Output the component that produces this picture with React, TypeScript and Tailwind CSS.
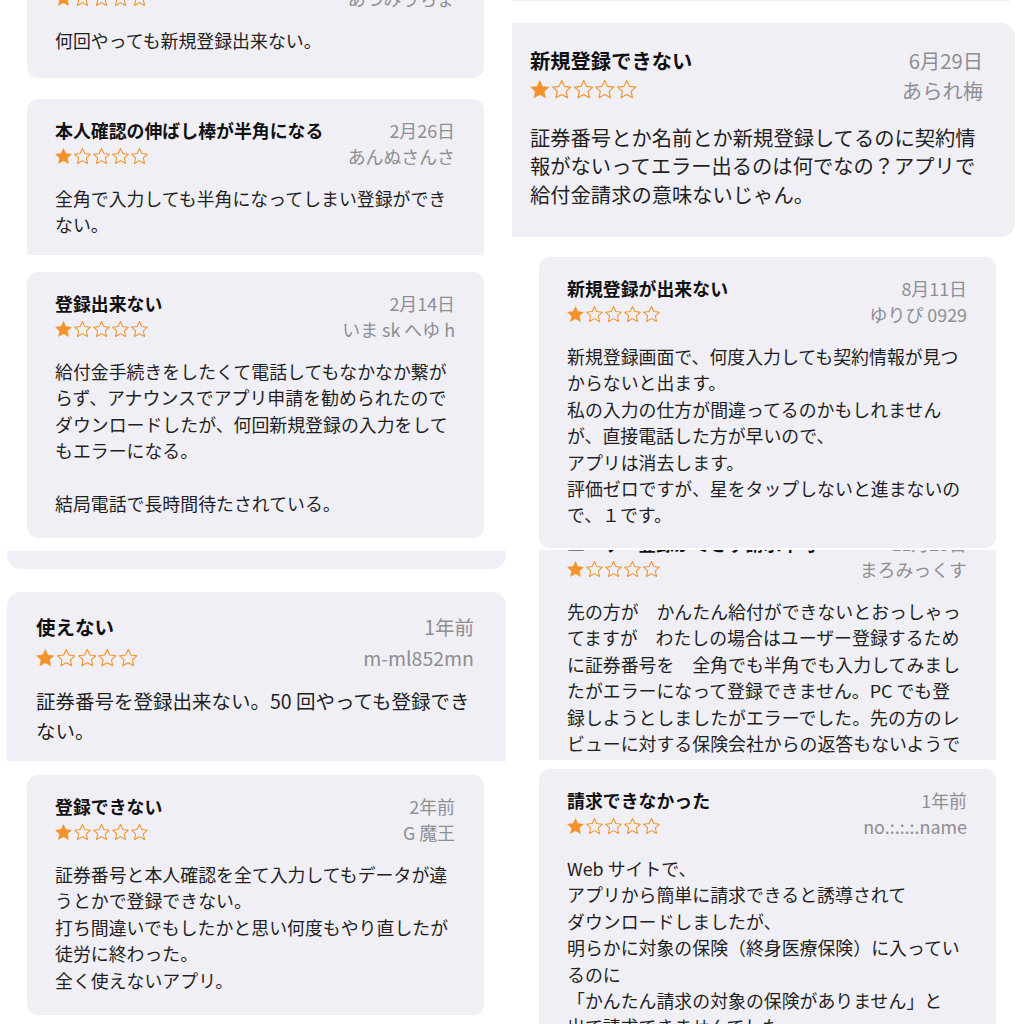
import React from "react";

type Variant = "sm" | "d" | "f";

const V: Record<Variant, { pad: string; titleRow: string; text: string; starRow: string; body: string; star: number; gap: string }> = {
  sm: {
    pad: "pl-[28px] pr-[29px] pt-[18px]",
    titleRow: "h-[26px]",
    text: "text-[17.9px]",
    starRow: "h-[27px]",
    body: "mt-[15px] leading-[26.4px]",
    star: 17,
    gap: "gap-[2px]",
  },
  d: {
    pad: "pl-[29px] pr-[32px] pt-[21px]",
    titleRow: "h-[28px]",
    text: "text-[19.5px]",
    starRow: "h-[34px]",
    body: "mt-[11px] leading-[30px]",
    star: 18.5,
    gap: "gap-[2.3px]",
  },
  f: {
    pad: "pl-[18px] pr-[32px] pt-[23px]",
    titleRow: "h-[28px]",
    text: "text-[20.3px]",
    starRow: "h-[32px]",
    body: "mt-[17px] leading-[28.3px]",
    star: 19.5,
    gap: "gap-[2.3px]",
  },
};

const STAR = "M12 2.2l2.9 6.2 6.8.8-5 4.6 1.4 6.7L12 17.1l-6.1 3.4 1.4-6.7-5-4.6 6.8-.8z";

function Star({ filled, size }: { filled: boolean; size: number }) {
  return (
    <svg width={size} height={size} viewBox="1.6 1.6 20.8 20.8">
      <path
        d={STAR}
        fill={filled ? "#f3922a" : "none"}
        stroke="#f3922a"
        strokeWidth={filled ? 0.6 : 1.25}
        strokeLinejoin="round"
      />
    </svg>
  );
}

function Stars({ v }: { v: Variant }) {
  return (
    <div className={`flex items-center ${V[v].gap}`}>
      {[0, 1, 2, 3, 4].map((i) => (
        <Star key={i} filled={i === 0} size={V[v].star} />
      ))}
    </div>
  );
}

function Review({
  v,
  title,
  date,
  author,
  lines,
  outer,
  inner = "",
}: {
  v: Variant;
  title: string;
  date: string;
  author: string;
  lines: string[];
  outer: string;
  inner?: string;
}) {
  const c = V[v];
  return (
    <div className={`bg-[#f0eff5] overflow-hidden shrink-0 ${outer}`}>
      <div className={`${c.pad} ${c.text} ${inner}`}>
        <div className={`flex items-center justify-between ${c.titleRow}`}>
          <span className="font-bold text-[#111111] whitespace-nowrap">{title}</span>
          <span className="text-[#8e8e93] whitespace-nowrap">{date}</span>
        </div>
        <div className={`flex items-center justify-between ${c.starRow}`}>
          <Stars v={v} />
          <span className="text-[#8e8e93] whitespace-nowrap">{author}</span>
        </div>
        <div className={`text-[#1f1f1f] ${c.body}`}>
          {lines.map((l, i) => (
            <div key={i} className="whitespace-pre">
              {l === "" ? "\u00a0" : l}
            </div>
          ))}
        </div>
      </div>
    </div>
  );
}

export default function App() {
  return (
    <div className="w-[1024px] h-[1024px] overflow-hidden bg-white flex font-['Noto_Sans_CJK_JP','Noto_Sans',sans-serif]">
      {/* Left column */}
      <div className="w-[512px] flex flex-col shrink-0">
        <Review
          v="sm"
          outer="ml-[27px] w-[457px] h-[78px] rounded-b-[11px]"
          inner="-mt-[59px]"
          title="新規登録ができない"
          date="3月2日"
          author="あつみうちょ"
          lines={["何回やっても新規登録出来ない。"]}
        />
        <Review
          v="sm"
          outer="mt-[21px] ml-[27px] w-[457px] h-[156px] rounded-t-[11px]"
          title="本人確認の伸ばし棒が半角になる"
          date="2月26日"
          author="あんぬさんさ"
          lines={["全角で入力しても半角になってしまい登録ができ", "ない。"]}
        />
        <Review
          v="sm"
          outer="mt-[17px] ml-[27px] w-[457px] h-[266px] rounded-[11px]"
          title="登録出来ない"
          date="2月14日"
          author="いま sk へゆ h"
          lines={[
            "給付金手続きをしたくて電話してもなかなか繋が",
            "らず、アナウンスでアプリ申請を勧められたので",
            "ダウンロードしたが、何回新規登録の入力をして",
            "もエラーになる。",
            "",
            "結局電話で長時間待たされている。",
          ]}
        />
        <div className="mt-[13px] ml-[7px] w-[499px] h-[18px] bg-[#f0eff5] rounded-b-[14px] shrink-0" />
        <Review
          v="d"
          outer="mt-[23px] ml-[7px] w-[499px] h-[169px] rounded-t-[14px]"
          title="使えない"
          date="1年前"
          author="m-ml852mn"
          lines={["証券番号を登録出来ない。50 回やっても登録でき", "ない。"]}
        />
        <Review
          v="sm"
          outer="mt-[14px] ml-[27px] w-[457px] h-[240px] rounded-[11px]"
          title="登録できない"
          date="2年前"
          author="G 魔王"
          lines={[
            "証券番号と本人確認を全て入力してもデータが違",
            "うとかで登録できない。",
            "打ち間違いでもしたかと思い何度もやり直したが",
            "徒労に終わった。",
            "全く使えないアプリ。",
          ]}
        />
      </div>

      {/* Right column */}
      <div className="w-[512px] flex flex-col shrink-0">
        <div className="w-[498px] h-[1px] bg-[#efeef3] shrink-0" />
        <Review
          v="f"
          outer="mt-[22px] w-[503px] h-[214px] rounded-r-[14px]"
          title="新規登録できない"
          date="6月29日"
          author="あられ梅"
          lines={[
            "証券番号とか名前とか新規登録してるのに契約情",
            "報がないってエラー出るのは何でなの？アプリで",
            "給付金請求の意味ないじゃん。",
          ]}
        />
        <Review
          v="sm"
          outer="mt-[20px] ml-[27px] w-[457px] h-[291px] rounded-[11px]"
          title="新規登録が出来ない"
          date="8月11日"
          author="ゆりぴ 0929"
          lines={[
            "新規登録画面で、何度入力しても契約情報が見つ",
            "からないと出ます。",
            "私の入力の仕方が間違ってるのかもしれません",
            "が、直接電話した方が早いので、",
            "アプリは消去します。",
            "評価ゼロですが、星をタップしないと進まないの",
            "で、１です。",
          ]}
        />
        <Review
          v="sm"
          outer="mt-[2px] ml-[27px] w-[457px] h-[210px]"
          inner="-mt-[38px]"
          title="ユーザー登録ができず請求不可"
          date="11月23日"
          author="まろみっくす"
          lines={[
            "先の方が　かんたん給付ができないとおっしゃっ",
            "てますが　わたしの場合はユーザー登録するため",
            "に証券番号を　全角でも半角でも入力してみまし",
            "たがエラーになって登録できません。PC でも登",
            "録しようとしましたがエラーでした。先の方のレ",
            "ビューに対する保険会社からの返答もないようで",
            "すし、アプリは使えないと判断しました。",
          ]}
        />
        <Review
          v="sm"
          outer="mt-[9px] ml-[27px] w-[457px] h-[300px] rounded-t-[11px]"
          title="請求できなかった"
          date="1年前"
          author="no.:.:.:.name"
          lines={[
            "Web サイトで、",
            "アプリから簡単に請求できると誘導されて",
            "ダウンロードしましたが、",
            "明らかに対象の保険（終身医療保険）に入ってい",
            "るのに",
            "「かんたん請求の対象の保険がありません」と",
            "出て請求できませんでした。",
          ]}
        />
      </div>
    </div>
  );
}
